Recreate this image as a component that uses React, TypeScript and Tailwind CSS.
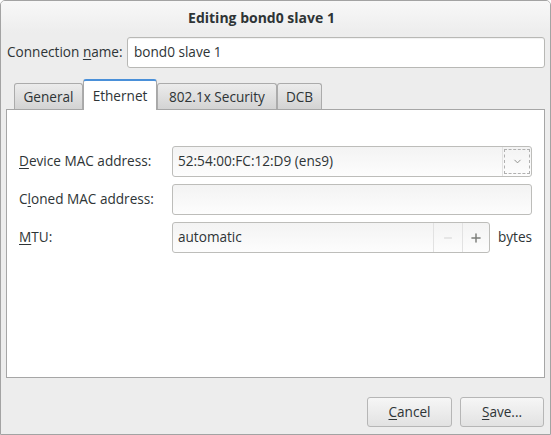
import { ChevronDown, Minus, Plus } from 'lucide-react';

const tabs = [
  { label: 'General', width: 'w-[69px]' },
  { label: 'Ethernet', width: 'w-[74px]', active: true },
  { label: '802.1x Security', width: 'w-[120px]' },
  { label: 'DCB', width: 'w-[45px]' },
];

const Mnemonic = ({ before = '', letter, after = '' }: { before?: string; letter: string; after?: string }) => (
  <span>
    {before}
    <span className="underline underline-offset-2">{letter}</span>
    {after}
  </span>
);

const App = () => {
  return (
    <div
      className="w-[551px] h-[435px] flex flex-col bg-[#ededed] border border-[#a3a3a3] rounded-t-[5px] overflow-hidden text-[13.6px] text-[#2e3436]"
      style={{ fontFamily: '"Open Sans", "DejaVu Sans", sans-serif' }}
    >
      {/* title bar */}
      <div className="h-[32px] flex items-center justify-center bg-gradient-to-b from-[#f8f8f8] to-[#ededed] font-bold text-[14px] pt-[1px] pr-[28px]">
        Editing bond0 slave 1
      </div>

      {/* connection name */}
      <div className="mt-[4px] flex items-center pl-[6px] pr-[5px]">
        <div className="w-[120px]">
          <Mnemonic before="Connection " letter="n" after="ame:" />
        </div>
        <div className="flex-1 h-[31px] flex items-center px-[6px] bg-white border border-[#b8b8b5] rounded-[3px] shadow-[inset_0_1px_1px_rgba(0,0,0,0.06)]">
          bond0 slave 1
        </div>
      </div>

      {/* notebook */}
      <div className="mt-[11px] mx-[5px] flex flex-col">
        <div className="flex items-end h-[30px] pl-[8px] relative z-10">
          {tabs.map((tab) =>
            tab.active ? (
              <div
                key={tab.label}
                className={`${tab.width} h-[31px] -mb-px flex items-center justify-center bg-white border border-[#a8a8a8] border-t-2 border-t-[#4a90d9] border-b-0 rounded-t-[3px] pt-[1px]`}
              >
                {tab.label}
              </div>
            ) : (
              <div
                key={tab.label}
                className={`${tab.width} h-[26px] flex items-center justify-center bg-gradient-to-b from-[#ececec] to-[#d3d3d3] border border-[#ababab] border-b-0 rounded-t-[3px] pt-[1px]`}
              >
                {tab.label}
              </div>
            ),
          )}
        </div>
        <div className="h-[269px] bg-white border border-[#a6a6a6] px-[12px] pt-[36px] flex flex-col gap-[7px]">
          <div className="flex items-center">
            <div className="w-[153px]">
              <Mnemonic letter="D" after="evice MAC address:" />
            </div>
            <div className="flex-1 h-[31px] flex items-center bg-gradient-to-b from-[#f3f3f3] to-[#fdfdfd] border border-[#bdbdba] rounded-[3px]">
              <div className="flex-1 pl-[5px]">52:54:00:FC:12:D9 (ens9)</div>
              <div className="h-full border-l border-[#e2e2e2] flex items-center px-[1px]">
                <div className="w-[26px] h-[25px] border border-dashed border-[#b0b0b0] flex items-center justify-center">
                  <ChevronDown className="w-[11px] h-[11px] text-[#888a85]" strokeWidth={2} />
                </div>
              </div>
            </div>
          </div>

          <div className="flex items-center">
            <div className="w-[153px]">
              <Mnemonic before="C" letter="l" after="oned MAC address:" />
            </div>
            <div className="flex-1 h-[31px] bg-gradient-to-b from-[#f3f3f3] to-[#fdfdfd] border border-[#bdbdba] rounded-[3px]" />
          </div>

          <div className="flex items-center">
            <div className="w-[153px]">
              <Mnemonic letter="M" after="TU:" />
            </div>
            <div className="w-[318px] h-[31px] flex items-center bg-gradient-to-b from-[#f3f3f3] to-[#fdfdfd] border border-[#bdbdba] rounded-[3px]">
              <div className="flex-1 pl-[5px]">automatic</div>
              <div className="w-[29px] h-full border-l border-[#e2e2e2] flex items-center justify-center">
                <Minus className="w-[12px] h-[12px] text-[#d3d3d3]" strokeWidth={2} />
              </div>
              <div className="w-[27px] h-full border-l border-[#e2e2e2] flex items-center justify-center">
                <Plus className="w-[14px] h-[14px] text-[#7b7d79]" strokeWidth={2.5} />
              </div>
            </div>
            <div className="ml-[8px]">bytes</div>
          </div>
        </div>
      </div>

      {/* buttons */}
      <div className="mt-[19px] flex justify-end gap-[8px] pr-[6px]">
        <button className="w-[85px] h-[30px] bg-gradient-to-b from-[#f6f6f6] to-[#e2e2e2] border border-[#b6b6b6] rounded-[3px] pt-[1px]">
          <Mnemonic letter="C" after="ancel" />
        </button>
        <button className="w-[84px] h-[30px] bg-gradient-to-b from-[#f6f6f6] to-[#e2e2e2] border border-[#b6b6b6] rounded-[3px] pt-[1px]">
          <Mnemonic letter="S" after="ave..." />
        </button>
      </div>
    </div>
  );
};

export default App;
